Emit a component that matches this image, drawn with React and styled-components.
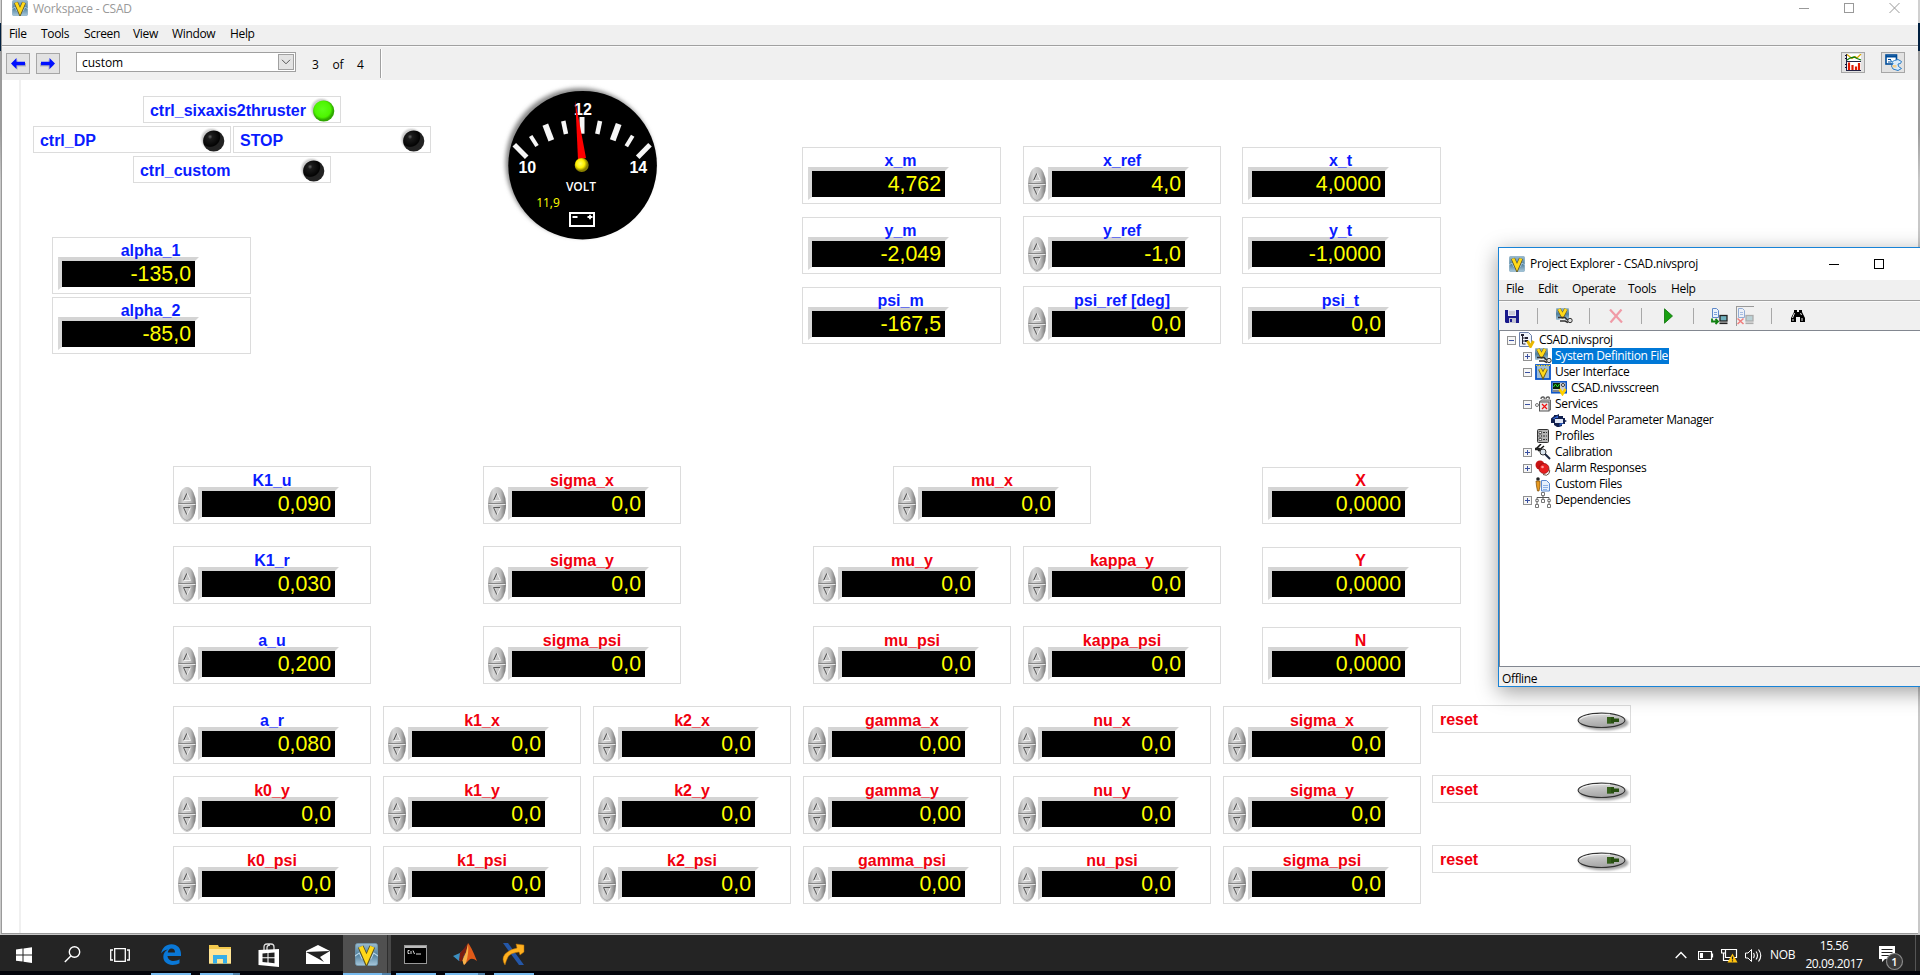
import React from "react";
import styled, { createGlobalStyle, css } from "styled-components";

const Global = createGlobalStyle`
  * { box-sizing: border-box; }
  html, body { margin: 0; padding: 0; }
  body {
    width: 1920px; height: 975px; overflow: hidden; background: #fff;
    font: 12px/16px "Open Sans", "Noto Sans", sans-serif;
    letter-spacing: -0.34px; color: #000;
  }
  svg { display: block; flex: none; }
`;

const BLUE = "#0a1cff";
const RED = "#f0000f";

/* ---------- page shell ---------- */
const Desktop = styled.div`
  position: relative; width: 1920px; height: 975px; overflow: hidden;
  display: flex; flex-direction: column;
  background: linear-gradient(#d0d0d0 0 23px, #001f3f 23px 51px, #9c9c9c 51px 130px, #c8c8c8 180px);
`;
const MainWindow = styled.section`
  height: 934px; margin: 0 2px 1px 1px; display: flex; flex-direction: column;
  background: #fff; border: solid #9a9a9a; border-width: 0 0 1px 1px;
`;
const TitleBar = styled.header`
  height: 25px; padding: 0 18px 0 10px; display: flex; align-items: flex-start;
  color: #999;
`;
const TitleText = styled.span`
  margin-left: 5px; line-height: 17px; letter-spacing: -0.22px;
`;
const Spacer = styled.div`flex: 1;`;
const Caption = styled.div`
  display: flex; gap: ${p => p.$gap}px; padding-top: ${p => p.$top}px;
`;
const MenuBar = styled.nav`
  height: 21px; flex: none; display: flex; background: #f0f0f0;
  padding: 0 0 0 7px; border-bottom: 1px solid #a0a0a0;
`;
const MenuItem = styled.span`
  width: ${p => p.$w}px; line-height: 17px; white-space: nowrap;
`;
const ToolBar = styled.div`
  height: 34px; flex: none; display: flex; align-items: flex-start; background: #f0f0f0;
  border-top: 1px solid #fafafa; padding: 5px 13px 0 4px;
`;
const ToolButton = styled.div`
  width: 24px; height: 21px; margin: ${p => p.$m || "0"};
  border: 1px solid #a6a6a6; background: #e2e2e2;
  display: flex; align-items: center; justify-content: center;
`;
const Combo = styled.div`
  width: 220px; height: 20px; margin-left: 16px; padding: 0 1px 0 5px;
  display: flex; align-items: center; justify-content: space-between;
  background: #fff; border: 1px solid #a0a0a0; letter-spacing: -0.05px;
  span { padding-top: 2px; }
`;
const ComboArrow = styled.div`
  width: 16px; height: 16px; background: #e3e3e3; border: 1px solid #a0a0a0;
  display: flex; align-items: center; justify-content: center;
`;
const Pager = styled.div`
  display: flex; gap: 14px; margin: 5px 0 0 16px;
`;
const ToolDivider = styled.div`
  width: 2px; height: 29px; margin: -3px 0 0 16px;
  border-left: 1px solid #a0a0a0; border-right: 1px solid #fff;
`;
const Screen = styled.main`
  flex: 1; margin-left: 17px; border-left: 2px solid #f0f0f0; background: #fff;
`;

/* ---------- dashboard sections ---------- */
const UpperSection = styled.div`
  height: 386px; display: flex; align-items: flex-start;
`;
const Column = styled.div`
  display: flex; flex-direction: column; align-items: flex-start;
  gap: ${p => p.$gap || 0}px; margin: ${p => p.$m || "0"}; width: ${p => p.$w ? p.$w + "px" : "auto"};
`;
const Row = styled.div`
  display: flex; gap: ${p => p.$gap || 0}px; margin: ${p => p.$m || "0"};
`;
const TelemetryGrid = styled.div`
  display: grid; grid-template-columns: 221px 219px 199px; grid-auto-rows: 58px;
  row-gap: 12px; align-items: end; margin: 66px 0 0 137px;
`;
const MiddleSection = styled.div`
  display: flex; align-items: flex-start; height: 240px; padding-left: 152px;
`;
const LowerSection = styled.div`
  display: flex; align-items: flex-start; padding-left: 152px;
`;
const GainGrid = styled.div`
  display: grid; grid-template-columns: repeat(6, 198px); gap: 12px;
`;

/* ---------- dashboard parts ---------- */
const frame = css`border: 1px solid #dcdcdc; background: #fff;`;
const Card = styled.div`
  ${frame}
  width: ${p => (p.$ctl ? 198 : 199)}px; height: ${p => (p.$ctl ? 58 : 57)}px;
  padding-top: ${p => (p.$ctl ? 5 : 4)}px;
  font-family: "Liberation Sans", Arial, sans-serif; letter-spacing: 0;
`;
const Label = styled.div`
  position: relative; z-index: 1; height: 15px;
  font: bold 16px/18px "Liberation Sans", Arial, sans-serif; letter-spacing: 0;
  text-align: center; color: ${p => (p.$red ? RED : BLUE)};
  padding-right: ${p => (p.$ctl ? 0 : 2)}px;
`;
const Body = styled.div`
  display: flex; align-items: flex-start; gap: 2px;
  padding-left: ${p => (p.$ctl ? 4 : 5)}px;
`;
const Display = styled.div`
  width: 141px; height: 33px; border-style: solid; border-width: 4px 4px 3px 4px;
  border-color: #d4d4d4 #fff #fff #d9d9d9;
`;
const Value = styled.div`
  height: 26px; background: #000; color: #ff0; text-align: right; padding-right: 4px;
  font-size: 21.33px; line-height: 27px;
`;
const Led = styled.div`
  ${frame}
  width: 198px; height: 27px; margin: ${p => p.$m || "0"}; padding: 0 5px 0 6px;
  display: flex; align-items: center; justify-content: space-between;
`;
const Reset = styled(Led)`width: 199px; height: 28px; padding: 0 0 0 7px;`;
const SideLabel = styled.span`
  font: bold 16px/20px "Liberation Sans", Arial, sans-serif; letter-spacing: -0.03px; white-space: nowrap;
  padding-top: 2px; color: ${p => (p.$red ? RED : BLUE)};
`;

function Spinner() {
  return (
    <svg width="18" height="35" viewBox="0 0 18 35">
      <ellipse cx="9" cy="17.5" rx="9" ry="17.4" fill="url(#spin)" />
      <path d="M2.5 27 Q9 40 15.5 27 Q12 33 9 33 Q6 33 2.5 27Z" fill="#666" opacity=".75" />
      <path d="M0.5 16.5H17.5" stroke="#858585" />
      <path d="M0.5 17.5H17.5" stroke="#e4e4e4" />
      <path d="M5.5 13.5L9 6" stroke="#4a4a4a" fill="none" />
      <path d="M9 6L12.5 13.5H5.5" stroke="#f2f2f2" fill="none" />
      <path d="M12.5 20.5H5.5L9 28" stroke="#5a5a5a" fill="none" />
      <path d="M9 28L12.5 20.5" stroke="#f2f2f2" fill="none" />
    </svg>
  );
}
function Control({ name, value, red }) {
  return (
    <Card $ctl>
      <Label $ctl $red={red}>{name}</Label>
      <Body $ctl><Spinner /><Display><Value>{value}</Value></Display></Body>
    </Card>
  );
}
function Indicator({ name, value, red }) {
  return (
    <Card>
      <Label $red={red}>{name}</Label>
      <Body><Display><Value>{value}</Value></Display></Body>
    </Card>
  );
}
function LedLight({ on }) {
  return (
    <svg width="25" height="25" viewBox="0 0 25 25">
      <circle cx="11.5" cy="12" r="11.5" fill="url(#halo)" />
      <circle cx="13.7" cy="14" r="10.6" fill={on ? "url(#ledOn)" : "url(#ledOff)"} />
    </svg>
  );
}
function StatusLed({ name, on, m }) {
  return <Led $m={m}><SideLabel>{name}</SideLabel><LedLight on={on} /></Led>;
}
function ResetButton() {
  return (
    <Reset>
      <SideLabel $red>reset</SideLabel>
      <svg width="54" height="26" viewBox="0 0 54 26">
        <ellipse cx="28" cy="16.8" rx="24.5" ry="7.5" fill="#888" opacity=".75" filter="url(#soft)" />
        <ellipse cx="25.5" cy="14.3" rx="23.4" ry="7.2" fill="url(#pill)" stroke="#333" strokeWidth="1.1" />
        <path d="M4 13.3 Q10 8.300 25 8.300 H34" stroke="#f5f5f5" fill="none" />
        <path d="M31 11h7v1.500h5v3.500h-5v1.500h-7z" fill="#274f10" />
        <path d="M31 11h4v6.500h-4z" fill="#3d6b22" opacity=".6" />
      </svg>
    </Reset>
  );
}
const HiddenDefs = styled.svg`position: absolute;`;
function Defs() {
  return (
    <HiddenDefs width="0" height="0">
      <defs>
        <linearGradient id="spin"><stop offset="0" stopColor="#a2a2a2" /><stop offset=".3" stopColor="#d6d6d6" /><stop offset=".7" stopColor="#bcbcbc" /><stop offset="1" stopColor="#747474" /></linearGradient>
        <linearGradient id="pill" x2="0.2" y2="1"><stop offset="0" stopColor="#eee" /><stop offset=".4" stopColor="#c4c4c4" /><stop offset="1" stopColor="#a6a6a6" /></linearGradient>
        <radialGradient id="halo"><stop offset=".8" stopColor="#cfcfcf" /><stop offset="1" stopColor="#efefef" stopOpacity=".3" /></radialGradient>
        <radialGradient id="ledOn" cx=".45" cy=".42"><stop offset="0" stopColor="#5dff1a" /><stop offset=".75" stopColor="#4df500" /><stop offset="1" stopColor="#2fa800" /></radialGradient>
        <radialGradient id="ledOff" cx=".33" cy=".3"><stop offset="0" stopColor="#666" /><stop offset=".22" stopColor="#1c1c1c" /><stop offset=".9" stopColor="#030303" /><stop offset="1" stopColor="#222" /></radialGradient>
        <radialGradient id="hub" cx=".4" cy=".4"><stop offset="0" stopColor="#ff6" /><stop offset=".6" stopColor="#fff000" /><stop offset="1" stopColor="#8a8000" /></radialGradient>
        <linearGradient id="logo" x2="0" y2="1"><stop offset="0" stopColor="#9dbdd0" /><stop offset=".5" stopColor="#4f7f9d" /><stop offset="1" stopColor="#a9c9dc" /></linearGradient>
        <filter id="soft" x="-20%" y="-50%" width="140%" height="200%"><feGaussianBlur stdDeviation="1.3" /></filter>
        <filter id="gaugeShade" x="-20%" y="-20%" width="140%" height="140%"><feGaussianBlur stdDeviation="2" /></filter>
      </defs>
    </HiddenDefs>
  );
}

const GaugeText = styled.text`
  font: bold ${p => p.$s}px ${p => p.$ui ? '"Open Sans"' : '"Liberation Sans"'}, sans-serif;
  font-weight: ${p => p.$w || "bold"}; fill: ${p => p.$c || "#fff"}; letter-spacing: 0; text-anchor: middle;
`;
const TICKS = [
  [14.3, 64.7, 26.7, 77.3, 5], [30.7, 56, 37, 66, 4], [45.3, 44.7, 51.3, 60.3, 6],
  [63.3, 41, 66, 54, 4.5], [82, 37, 82, 53.7, 5], [100, 41, 97.3, 54, 4.5],
  [118.7, 44, 112.7, 60.3, 6], [132.7, 55.7, 126.3, 66.3, 4], [150, 64.7, 137.7, 77.3, 5],
];
function Gauge() {
  return (
    <svg width="165" height="165" viewBox="0 0 165 165">
      <circle cx="80" cy="82.5" r="74.5" fill="#888" filter="url(#gaugeShade)" />
      <circle cx="82.6" cy="85.2" r="74.3" fill="#000" />
      {TICKS.map(([a, b, c, d, w]) => (
        <line key={a} x1={a} y1={b} x2={c} y2={d} stroke="#f6f6f6" strokeWidth={w} />
      ))}
      <GaugeText x="83" y="34.7" $s={16}>12</GaugeText>
      <GaugeText x="27.3" y="92.7" $s={16}>10</GaugeText>
      <GaugeText x="138.3" y="92.7" $s={16}>14</GaugeText>
      <polygon points="75.3,21 78,80 86,78" fill="#f00" />
      <circle cx="81.7" cy="85" r="7" fill="url(#hub)" />
      <GaugeText x="81" y="111" $s={12} $ui $w={600}>VOLT</GaugeText>
      <GaugeText x="48" y="127.3" $s={12} $ui $w={400} $c="#ff0">11,9</GaugeText>
      <rect x="70" y="133" width="24" height="13" fill="none" stroke="#fff" strokeWidth="2" />
      <path d="M72.5 137h5M87.5 137h5M90 134.8v4.4" stroke="#fff" strokeWidth="1.8" />
    </svg>
  );
}

/* ---------- icons ---------- */
const Logo = ({ s = 16 }) => (
  <svg width={s} height={s} viewBox="0 0 16 16">
    <rect x=".3" y=".3" width="15.4" height="15.4" rx="1.6" fill="url(#logo)" stroke="#6f9ab4" strokeWidth=".5" />
    <path d="M0 9l3-2 2 4 3-1 3 1 2-4 3 2" stroke="#b9d7e8" strokeWidth=".8" fill="none" />
    <polyline points="4,2.500 8,12 12,2.500" fill="none" stroke="#5d5320" strokeWidth="4.200" />
    <polyline points="4,2.500 8,11.600 12,2.500" fill="none" stroke="#ffd91a" strokeWidth="3" />
  </svg>
);
const NavArrow = ({ flip }) => (
  <svg width="16" height="15" viewBox="0 0 16 15">
    <g transform={flip ? "translate(16 0) scale(-1 1)" : undefined}>
      <path d="M2 9L7.5 3.5V7H16V10.5H7.5V14Z" fill="#999" opacity=".6" />
      <path d="M1 7.5L6.5 2V5.8H15V9.2H6.5V13Z" fill="#0010ff" />
    </g>
  </svg>
);
const MinIcon = () => <svg width="10" height="10"><path d="M0 5.5H10" stroke="currentColor" /></svg>;
const MaxIcon = () => <svg width="10" height="10"><rect x=".5" y=".5" width="9" height="9" fill="none" stroke="currentColor" /></svg>;
const CloseIcon = () => <svg width="11" height="10"><path d="M.5 0L10.5 10M10.5 0L.5 10" stroke="currentColor" /></svg>;
const ChartIcon = () => (
  <svg width="18" height="17" viewBox="0 0 18 17">
    <path d="M2 0h15v16H2z" fill="#fff" />
    <path d="M2.500 0V17M2.500 7.500H17M2.500 16.500H17" stroke="#224" fill="none" />
    <path d="M1 1.500h2M1 4.500h2M1 10.500h2M1 13.500h2" stroke="#113" />
    <path d="M3 .5l5 4 3-2 2 1.500 4-4" stroke="#dca800" strokeWidth="1.3" fill="none" />
    <path d="M3 6l3-2 4-1 3 1.500 4 1.500" stroke="#0a7a0a" strokeWidth="1.3" fill="none" />
    <path d="M5 8.500v7.500M8.500 11v5M12 12.500v3.500M15 9v7" stroke="#e01800" strokeWidth="2.200" />
  </svg>
);
const ScreensIcon = () => (
  <svg width="17" height="17" viewBox="0 0 17 17">
    <rect x="1" y="1" width="10.500" height="9" fill="#fff" stroke="#004d99" strokeWidth="1.600" />
    <path d="M1 2.500h11" stroke="#004d99" strokeWidth="2" /><path d="M3 5.500h3M3 8h3" stroke="#004d99" />
    <path d="M5.500 6.500Q7.500 8.500 9.500 6.500L13 5.500L16.500 7.500L15.500 9.500L13 10L13.500 12.500L16.500 14.500L13 16.500L8 15L6.500 12L8 9.500Z" fill="#d9ecfb" stroke="#2a7cc4" />
    <path d="M7.500 11h4v2.500h-4z" fill="#f5cf8a" />
  </svg>
);
const SaveIcon = () => (
  <svg width="14" height="14" viewBox="0 0 14 14">
    <path d="M0 1h14v13H1L0 13z" fill="#1a1a8c" /><path d="M3 1h8v6H3z" fill="#e9e9f5" />
    <path d="M4 3h6M4 5h6" stroke="#aab" /><path d="M4 9h7v5H4z" fill="#c4c4d2" /><path d="M5 10h2v3H5z" fill="#1a1a8c" />
  </svg>
);
const SysDefIcon = () => (
  <svg width="17" height="16" viewBox="0 0 17 16">
    <rect x="0" y="0" width="13" height="12" rx="1" fill="url(#logo)" />
    <polyline points="3,1 6.500,8 10,1" fill="none" stroke="#6d5c10" strokeWidth="3.800" />
    <polyline points="3,1 6.500,7.600 10,1" fill="none" stroke="#ffd91a" strokeWidth="2.700" />
    <path d="M2 9.500h7l2.500 2.500h2M4 13h5l3 1.500" stroke="#333" fill="none" strokeWidth="1.500" />
    <circle cx="14" cy="12.500" r="2.200" fill="#ddd" stroke="#333" />
    <path d="M3.500 10.800h5.500v1.200H3.500z" fill="#eee" />
  </svg>
);
const DeleteIcon = () => <svg width="14" height="14" viewBox="0 0 14 14"><path d="M1 .5L13 13.5M12.5 .5L1.5 13.5" stroke="#f09aa6" strokeWidth="2.2" /></svg>;
const PlayIcon = () => <svg width="9" height="16" viewBox="0 0 9 16"><path d="M.5 .8L8.5 8L.5 15.2Z" fill="#18a010" stroke="#0a7008" strokeWidth=".8" /></svg>;
const DeployIcon = ({ off }) => (
  <svg width="17" height="17" viewBox="0 0 17 17" opacity={off ? 0.65 : 1}>
    <path d="M1.5 .5h4l2 2v7h-6z" fill="#eaf1fb" stroke="#5f88c8" /><path d="M3 4.5h3M3 6.5h3" stroke="#7fa2da" />
    <rect x="9" y="7.5" width="7" height="5.5" fill={off ? "#9fc2c8" : "#6fb0bd"} stroke={off ? "#888" : "#222"} strokeWidth="1.3" />
    <path d="M8.5 15.3h8" stroke={off ? "#888" : "#222"} strokeWidth="1.6" />
    {off ? <path d="M.5 10.5l6 5.5M6.5 10.5l-6 5.5" stroke="#f04040" strokeWidth="1.5" />
      : <path d="M1 10.5v3h5M4.5 11l2.5 2.5L4.500 16" stroke="#108010" strokeWidth="1.8" fill="none" />}
  </svg>
);
const FindIcon = () => (
  <svg width="14" height="12" viewBox="0 0 14 12">
    <path d="M3 0h3v2h2V0h3v2l3 6v4H9V7H5v5H0V8l3-6z" fill="#000" /><path d="M3.500 3l-2 5M9.500 3l1 2M2 9v2M11 8v3" stroke="#fff" strokeWidth=".9" />
  </svg>
);
const ICONS = {
  project: <svg width="16" height="16" viewBox="0 0 16 16"><path d="M.5 .5h9l3 3v11H.5z" fill="#eef3fb" stroke="#6b7fa8" /><path d="M3.500 3v9M3.500 6h4M3.500 9h4M3.500 12h3" stroke="#223" fill="none" /><path d="M2 2h3v2H2zM6 5h3v2H6zM6 8h3v2H6z" fill="#223" /><polyline points="8.500,9 11.500,14.500 14.500,9" fill="none" stroke="#e8b800" strokeWidth="2.800" /></svg>,
  sysdef: <SysDefIcon />,
  ui: <svg width="16" height="16" viewBox="0 0 16 16"><rect x="1" y="1" width="14" height="14" fill="#9fbdd4" stroke="#0a55c8" strokeWidth="1.800" /><path d="M1 1.500h14" stroke="#ffd91a" strokeWidth="1.200" strokeDasharray="1.500 1" /><polyline points="5,5 8,11.500 11,5" fill="none" stroke="#6d5c10" strokeWidth="4" /><polyline points="5,5 8,11 11,5" fill="none" stroke="#ffd91a" strokeWidth="2.400" /></svg>,
  screen: <svg width="16" height="16" viewBox="0 0 16 16"><rect x=".8" y="1.800" width="14.500" height="11" fill="#c8cdd2" stroke="#0a55c8" strokeWidth="1.500" /><path d="M2 3h7v6H2z" fill="#06260a" /><path d="M2.500 7l2-3 2 3 2-3" stroke="#28e028" fill="none" /><circle cx="12" cy="5" r="1.500" fill="#fff" stroke="#333" /><path d="M2 11h7" stroke="#444" /><polyline points="8.500,9 11.500,14 14.500,9" fill="none" stroke="#ffd000" strokeWidth="2.600" /></svg>,
  services: <svg width="16" height="16" viewBox="0 0 16 16"><path d="M6 3q0-2 2-2t1 2M11 3q0-2 2-2t1 2" stroke="#555" strokeWidth="1.300" fill="none" /><path d="M4.500 6l2-2h9v10h-2" fill="#ccc" stroke="#666" /><rect x="4.500" y="6" width="9.500" height="9" fill="#e8e8e8" stroke="#555" /><circle cx="2" cy="9" r="1.500" fill="none" stroke="#777" /><path d="M7 8l5 5M12 8l-5 5" stroke="#f01010" strokeWidth="1.200" /></svg>,
  param: <svg width="16" height="13" viewBox="0 0 16 13"><path d="M0 4.500L3 2V1H6L8 0V2H12V4H14V6L16 7L14 8V10H11V12L8 13H6L3 11V9H0z" fill="#12204e" /><path d="M4 5h8v4H4z" fill="#dfe6f5" /><path d="M1.500 4.500L7 1.500V4H4V5.500zM13 9L8.500 12V9.500z" fill="#2f63d0" /></svg>,
  profiles: <svg width="16" height="16" viewBox="0 0 16 16"><rect x="2.500" y="1.500" width="11" height="13" rx="1" fill="#b4b4b4" stroke="#333" /><path d="M4 3.500h2.500v2H4zM4 7h2.500v2H4zM4 10.500h2.500v2H4z" fill="#fff" stroke="#333" strokeWidth=".7" /><path d="M8 4.500h4M8 8h4M8 11.500h4" stroke="#333" strokeDasharray="2 1" /></svg>,
  calib: <svg width="16" height="16" viewBox="0 0 16 16"><path d="M1 5l5-5M3 7l6-5" stroke="#111" strokeWidth="1.500" /><path d="M0 5h4l4 4" stroke="#222" strokeWidth="2.500" fill="none" /><circle cx="8" cy="8" r="3" fill="#d9e4ee" stroke="#333" /><path d="M10 10l5 5" stroke="#1b2740" strokeWidth="2" /></svg>,
  alarm: <svg width="16" height="16" viewBox="0 0 16 16"><circle cx="5" cy="5" r="4.500" fill="#c81414" /><circle cx="9" cy="8.500" r="5" fill="#e81e1e" stroke="#8a0a0a" strokeWidth=".7" /><circle cx="7.500" cy="7" r="1.300" fill="#ff9a9a" /><path d="M8 14.500q4 2 6-1 2-3-1-5" fill="none" stroke="#6b4a3a" /></svg>,
  custom: <svg width="16" height="16" viewBox="0 0 16 16"><circle cx="3" cy="3" r="1.800" fill="#222" /><path d="M1 5h4v5l-1 5H2.500L1.500 10z" fill="#e89a20" stroke="#7a4a08" strokeWidth=".7" /><path d="M6.500 4.500h5l3 3v7.500h-8z" fill="#e6f0fc" stroke="#5b8ad0" /><path d="M8 9.500h5M8 11.500h5M8 13.500h4" stroke="#8eb2e6" /></svg>,
  deps: <svg width="16" height="16" viewBox="0 0 16 16"><path d="M8 3v5M2 12V5.500h12V12" stroke="#555" fill="none" /><g fill="#fff" stroke="#777"><path d="M6.500 .5h3v3h-3zM6.500 7.500h3v3h-3zM.5 12.500h3v3h-3zM12.500 12.500h3v3h-3zM.8 7.500h2.500v2H.8zM12.800 7.500h2.500v2h-2.500z" /></g></svg>,
};

/* ---------- project explorer ---------- */
const Explorer = styled.section`
  position: absolute; left: 1498px; top: 247px; width: 460px; height: 440px;
  display: flex; flex-direction: column; background: #f0f0f0;
  border: 1px solid #1883d7; box-shadow: 0 5px 20px rgba(0,0,0,.38);
`;
const ExplorerTitle = styled.header`
  height: 32px; flex: none; background: #fff; display: flex; align-items: center; padding-left: 10px;
  span { flex: none; width: 299px; margin-left: 5px; letter-spacing: -0.3px; }
`;
const ExplorerTools = styled.div`
  height: 29px; flex: none; display: flex; align-items: center; padding-left: 6px;
  border-top: 1px solid #fafafa;
`;
const Slot = styled.div`
  width: ${p => p.$w}px; flex: none; display: flex; align-items: center;
`;
const Pressed = styled.div`
  width: 18px; height: 20px; border: solid #999; border-width: 1px 0 0 1px; padding: 1px 0 0 0;
  overflow: hidden;
`;
const Bar = styled.i`width: 1px; height: 16px; background: #a8a8a8;`;
const Tree = styled.div`
  flex: 1; background: #fff; border: 1px solid #828790; padding: 1px 0 0 7px;
`;
const TreeRow = styled.div`
  height: 16px; display: flex; align-items: center; padding-left: ${p => p.$lvl * 16}px;
`;
const Expander = styled.i`
  width: 9px; height: 9px; margin-right: 3px; flex: none;
  ${p => p.$k && css`
    border: 1px solid #919191;
    background:
      linear-gradient(#3a50a0, #3a50a0) center / 5px 1px no-repeat,
      ${p.$k === "+" ? "linear-gradient(#3a50a0, #3a50a0) center / 1px 5px no-repeat," : ""}
      #f6f6f6;
  `}
`;
const IconBox = styled.div`width: 16px; height: 16px; flex: none; display: flex; align-items: center;`;
const TreeLabel = styled.span`
  height: 16px; line-height: 15px; margin-left: 1px; padding: 0 1px 0 3px; white-space: nowrap;
  ${p => p.$sel && css`background: #0078d7; color: #fff;`}
`;
const Status = styled.footer`height: 19px; flex: none; line-height: 24px; padding-left: 3px;`;

const TREE = [
  [0, "-", "project", "CSAD.nivsproj"],
  [1, "+", "sysdef", "System Definition File", true],
  [1, "-", "ui", "User Interface"],
  [2, "", "screen", "CSAD.nivsscreen"],
  [1, "-", "services", "Services"],
  [2, "", "param", "Model Parameter Manager"],
  [1, "", "profiles", "Profiles"],
  [1, "+", "calib", "Calibration"],
  [1, "+", "alarm", "Alarm Responses"],
  [1, "", "custom", "Custom Files"],
  [1, "+", "deps", "Dependencies"],
];

function ProjectExplorer() {
  return (
    <Explorer>
      <ExplorerTitle>
        <Logo /><span>Project Explorer - CSAD.nivsproj</span>
        <Slot $w={45}><MinIcon /></Slot><MaxIcon />
      </ExplorerTitle>
      <MenuBar>
        <MenuItem $w={32}>File</MenuItem><MenuItem $w={34}>Edit</MenuItem><MenuItem $w={56}>Operate</MenuItem>
        <MenuItem $w={43}>Tools</MenuItem><MenuItem $w={40}>Help</MenuItem>
      </MenuBar>
      <ExplorerTools>
        <Slot $w={32}><SaveIcon /></Slot><Slot $w={19}><Bar /></Slot>
        <Slot $w={33}><SysDefIcon /></Slot><Slot $w={20}><Bar /></Slot>
        <Slot $w={32}><DeleteIcon /></Slot><Slot $w={23}><Bar /></Slot>
        <Slot $w={29}><PlayIcon /></Slot><Slot $w={18}><Bar /></Slot>
        <Slot $w={25}><DeployIcon /></Slot><Slot $w={35}><Pressed><DeployIcon off /></Pressed></Slot>
        <Slot $w={20}><Bar /></Slot><FindIcon />
      </ExplorerTools>
      <Tree>
        {TREE.map(([lvl, k, icon, text, sel]) => (
          <TreeRow key={text} $lvl={lvl}>
            <Expander $k={k} /><IconBox>{ICONS[icon]}</IconBox><TreeLabel $sel={sel}>{text}</TreeLabel>
          </TreeRow>
        ))}
      </Tree>
      <Status>Offline</Status>
    </Explorer>
  );
}

/* ---------- taskbar ---------- */
const TaskBar = styled.footer`
  height: 40px; flex: none; display: flex; color: #fff;
  background: linear-gradient(#242424 0 36px, #02030a 36px);
`;
const Task = styled.div`
  width: ${p => p.$w || 49}px; flex: none; display: flex; align-items: center; justify-content: center;
  padding-bottom: 1px; padding-right: ${p => p.$pr || 0}px;
  ${p => p.$on && css`
    border-bottom: 2px solid #76b9ed;
    padding-bottom: 0;
  `}
  ${p => p.$stack && css`border-image: linear-gradient(90deg, #76b9ed 80%, #4f80a8 80%) 1;`}
  ${p => p.$active && css`background: linear-gradient(90deg, #505050 44px, #2e2e2e 44px 45px, #484848 45px);`}
  margin-right: ${p => p.$mr || 0}px;
`;
const Tray = styled.div`
  display: flex; align-items: flex-start; margin-left: auto; padding: 0 5px 0 0;
`;
const TrayItem = styled.div`width: ${p => p.$w}px; padding-top: ${p => p.$t}px;`;
const Clock = styled.div`
  width: 60px; margin: 2px 15px 0 0; text-align: center; line-height: 18px; letter-spacing: -0.4px;
`;
const ShowDesktop = styled.div`border-left: 1px solid #555; height: 36px; width: 5px; margin-right: -5px;`;

function Taskbar() {
  return (
    <TaskBar>
      <Task $w={48}><svg width="16" height="16"><path d="M0 2.500L6.500 1.500V7.500H0zM7.500 1.400L16 .2V7.500H7.500zM0 8.500H6.500V14.600L0 13.700zM7.500 8.500H16V15.900L7.500 14.700z" fill="#fff" /></svg></Task>
      <Task $w={48}><svg width="17" height="17" viewBox="0 0 17 17"><circle cx="10.500" cy="6" r="5.200" fill="none" stroke="#fff" strokeWidth="1.400" /><path d="M6.800 10L.8 16" stroke="#fff" strokeWidth="1.400" /></svg></Task>
      <Task $w={48} $mr={7}><svg width="20" height="14" viewBox="0 0 20 14"><path d="M4.700 .7h10.600v12.600H4.700zM3 2H.7v10H3M17 2h2.300v10H17" fill="none" stroke="#fff" strokeWidth="1.300" /></svg></Task>
      <Task $on $w={40} $mr={9}>
        <svg width="20" height="21" viewBox="0 0 20 21"><path d="M.2 9.500C1 4 5 .2 10.500 .2C16.500 .2 20 4.500 20 10V12H6.500C6.800 15.500 9.500 17 12.500 17C15 17 17 16.300 18.500 15.300V19.300C16.500 20.400 14 20.900 11.500 20.900C6 20.900 2.300 17.500 2.300 12.800C2.300 9.500 4 7 7 5.500C4 5.800 1.500 7.500 .2 9.500ZM6.800 8.500H14C14 6 12.700 4.500 10.500 4.500C8.500 4.500 7 6.200 6.800 8.500Z" fill="#0a78d7" /></svg>
      </Task>
      <Task $on $stack $w={40} $mr={9}>
        <svg width="22" height="19" viewBox="0 0 22 19"><path d="M0 0h9l1 2h12v16.500H0z" fill="#f3c94d" /><path d="M0 4h22v14.500H0z" fill="#ffe595" /><path d="M4 18.500V10h14v8.500h-4V14H8v4.500z" fill="#35aee8" /></svg>
      </Task>
      <Task $w={40} $mr={9}>
        <svg width="22" height="24" viewBox="0 0 22 24"><path d="M6 8V4q0-3 3-3h4q3 0 3 3v3M9 7V4.500q0-2.500 3-2.500" stroke="#ddd" strokeWidth="1.300" fill="none" /><path d="M.5 7L21 6v18L.5 22z" fill="#fff" /><path d="M4.500 10.500l5-.5v4.300h-5zM10.500 10l6-.6v4.900h-6zM4.500 15.200h5v4.300l-5-.5zM10.500 15.200h6v5l-6-.6z" fill="#222" /></svg>
      </Task>
      <Task $w={40} $mr={5}>
        <svg width="24" height="19" viewBox="0 0 24 19"><path d="M0 6L12 0L24 6V19H0z" fill="#fff" /><path d="M0 7L24 6L14 12L18 17L11 13z" fill="#222" /></svg>
      </Task>
      <Task $on $stack $active $w={48} $mr={5} $pr={2}><Logo s={23} /></Task>
      <Task $on $w={40} $mr={9} $pr={1}>
        <svg width="23" height="19" viewBox="0 0 23 19"><rect x=".5" y=".5" width="22" height="18" fill="#000" stroke="#999" /><path d="M1 2h21" stroke="#bbb" strokeWidth="2" /><path d="M4 5.500v3M4 5.500h1.500M4 8.500h1.500M7 6v3M9 5.500l1.500 3.500M12 9h5" stroke="#ddd" fill="none" /></svg>
      </Task>
      <Task $on $stack $w={40} $mr={9}>
        <svg width="24" height="23" viewBox="0 0 24 23"><path d="M0 13L7 10L13 5L11 14L6 18z" fill="#3b8fc0" /><path d="M7 10Q11 6 15 0Q12 12 8 19L6 17z" fill="#7a1c10" /><path d="M15 0Q18 3 24 18Q19 14 16 17L11 22Q10 17 9 18Q13 11 15 0z" fill="#e05a18" /><path d="M15 1Q16 10 13 20L11 22Q9 18 10 16Q14 9 15 1z" fill="#f7b24a" /></svg>
      </Task>
      <Task $on $w={40} $pr={2}>
        <svg width="23" height="23" viewBox="0 0 23 23"><path d="M1 0h5l16 22h-5z" fill="#2457a8" /><path d="M3 22Q-1 16 3 11Q8 6 15 5L14 1L22 2V9L18 12L17 9Q8 10 6 14Q4 18 3 22z" fill="#ffb01f" stroke="#b06a00" strokeWidth=".5" /></svg>
      </Task>
      <Tray>
        <TrayItem $w={23} $t={16}><svg width="12" height="8"><path d="M.7 7L6 1.500L11.300 7" stroke="#fff" strokeWidth="1.400" fill="none" /></svg></TrayItem>
        <TrayItem $w={23} $t={16}><svg width="16" height="9"><path d="M.5 .5h13v8H.5zM14.500 2.500v4" fill="none" stroke="#fff" strokeWidth="1.200" /><path d="M2 2h3v5H2z" fill="#fff" /></svg></TrayItem>
        <TrayItem $w={24} $t={13}><svg width="17" height="16" viewBox="0 0 17 16"><path d="M4.500 1.500h11v8h-11zM.5 1.500h4v3.500h-4zM2.500 5v7.500h5M7 12.500h3" fill="none" stroke="#fff" strokeWidth="1.200" /><path d="M11.500 5.500L16.500 14.500H6.500z" fill="#ffc20e" /><path d="M11.500 8.500v3M11.500 12.300v1.200" stroke="#222" strokeWidth="1.200" /></svg></TrayItem>
        <TrayItem $w={25} $t={13}><svg width="17" height="15" viewBox="0 0 17 15"><path d="M.5 5h2.500l3.500-3.500v12L3 10H.5z" fill="none" stroke="#fff" /><path d="M8.500 5q1.500 2.500 0 5M11 3.500q3 4 0 8M13.500 1.500q4.500 6 0 12" fill="none" stroke="#fff" strokeWidth="1.100" /></svg></TrayItem>
        <TrayItem $w={34} $t={12}>NOB</TrayItem>
        <Clock>15.56<br />20.09.2017</Clock>
        <TrayItem $w={36} $t={11}>
          <svg width="25" height="26" viewBox="0 0 25 26"><path d="M0 0h16v13H6L3 16V13H0z" fill="#fff" /><path d="M2.500 3.500h11M2.500 6.500h11M2.500 9.500h8" stroke="#222" strokeWidth="1.200" /><circle cx="15.500" cy="15.500" r="8" fill="#3a3a3a" stroke="#8a8a8a" strokeWidth="1.200" /><GaugeText x="15.500" y="19.500" $s={11} $ui $w={600}>1</GaugeText></svg>
        </TrayItem>
        <ShowDesktop />
      </Tray>
    </TaskBar>
  );
}

const GAINS = [
  [["a_r", "0,080", false], ["k1_x"], ["k2_x"], ["gamma_x", "0,00"], ["nu_x"], ["sigma_x"]],
  [["k0_y"], ["k1_y"], ["k2_y"], ["gamma_y", "0,00"], ["nu_y"], ["sigma_y"]],
  [["k0_psi"], ["k1_psi"], ["k2_psi"], ["gamma_psi", "0,00"], ["nu_psi"], ["sigma_psi"]],
];

export default function App() {
  return (
    <Desktop>
      <Global />
      <Defs />
      <MainWindow>
        <TitleBar>
          <Logo />
          <TitleText>Workspace - CSAD</TitleText>
          <Spacer />
          <Caption $gap={35} $top={3}><MinIcon /><MaxIcon /><CloseIcon /></Caption>
        </TitleBar>
        <MenuBar>
          <MenuItem $w={32}>File</MenuItem><MenuItem $w={43}>Tools</MenuItem><MenuItem $w={49}>Screen</MenuItem>
          <MenuItem $w={39}>View</MenuItem><MenuItem $w={58}>Window</MenuItem><MenuItem $w={40}>Help</MenuItem>
        </MenuBar>
        <ToolBar>
          <ToolButton $m="1px 6px 0 0"><NavArrow /></ToolButton>
          <ToolButton $m="1px 0 0 0"><NavArrow flip /></ToolButton>
          <Combo><span>custom</span><ComboArrow><svg width="10" height="6"><path d="M1 .8L5 4.800L9 .8" stroke="#555" fill="none" /></svg></ComboArrow></Combo>
          <Pager><span>3</span><span>of</span><span>4</span></Pager>
          <ToolDivider />
          <Spacer />
          <ToolButton $m="0 16px 0 0"><ChartIcon /></ToolButton>
          <ToolButton><ScreensIcon /></ToolButton>
        </ToolBar>
        <Screen>
          <UpperSection>
            <Column $w={479}>
              <Column $gap={3} $m="16px 0 54px 12px">
                <StatusLed name="ctrl_sixaxis2thruster" on m="0 0 0 110px" />
                <Row $gap={2}><StatusLed name="ctrl_DP" /><StatusLed name="STOP" /></Row>
                <StatusLed name="ctrl_custom" m="0 0 0 100px" />
              </Column>
              <Column $gap={3} $m="0 0 0 31px">
                <Indicator name="alpha_1" value="-135,0" />
                <Indicator name="alpha_2" value="-85,0" />
              </Column>
            </Column>
            <Gauge />
            <TelemetryGrid>
              <Indicator name="x_m" value="4,762" /><Control name="x_ref" value="4,0" /><Indicator name="x_t" value="4,0000" />
              <Indicator name="y_m" value="-2,049" /><Control name="y_ref" value="-1,0" /><Indicator name="y_t" value="-1,0000" />
              <Indicator name="psi_m" value="-167,5" /><Control name="psi_ref [deg]" value="0,0" /><Indicator name="psi_t" value="0,0" />
            </TelemetryGrid>
          </UpperSection>
          <MiddleSection>
            <Column $gap={22}>
              <Control name="K1_u" value="0,090" /><Control name="K1_r" value="0,030" /><Control name="a_u" value="0,200" />
            </Column>
            <Column $gap={22} $m="0 0 0 112px">
              <Control red name="sigma_x" value="0,0" /><Control red name="sigma_y" value="0,0" /><Control red name="sigma_psi" value="0,0" />
            </Column>
            <Column $gap={22} $m="0 0 0 132px">
              <Row $m="0 0 0 80px"><Control red name="mu_x" value="0,0" /></Row>
              <Row $gap={12}><Control red name="mu_y" value="0,0" /><Control red name="kappa_y" value="0,0" /></Row>
              <Row $gap={12}><Control red name="mu_psi" value="0,0" /><Control red name="kappa_psi" value="0,0" /></Row>
            </Column>
            <Column $gap={23} $m="1px 0 0 41px">
              <Indicator red name="X" value="0,0000" /><Indicator red name="Y" value="0,0000" /><Indicator red name="N" value="0,0000" />
            </Column>
          </MiddleSection>
          <LowerSection>
            <GainGrid>
              {GAINS.flat().map(([name, value = "0,0", red = true]) => (
                <Control key={name} name={name} value={value} red={red} />
              ))}
            </GainGrid>
            <Column $gap={42} $m="-1px 0 0 11px"><ResetButton /><ResetButton /><ResetButton /></Column>
          </LowerSection>
        </Screen>
      </MainWindow>
      <Taskbar />
      <ProjectExplorer />
    </Desktop>
  );
}
